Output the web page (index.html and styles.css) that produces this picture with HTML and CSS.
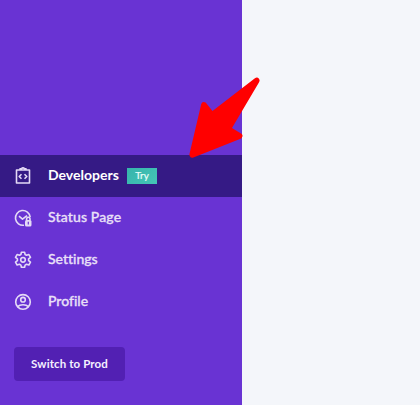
FILE: index.html
```html
<!DOCTYPE html>
<html lang="en">
<head>
<meta charset="utf-8">
<title>Developers</title>
<link rel="stylesheet" href="styles.css">
</head>
<body>
<aside class="sidebar">
  <nav class="menu">
    <a class="item active">
      <svg class="icon" viewBox="0 0 18 18"><path d="M2.5 3h13v13h-13zM6 3V1.8h1.6a1.5 1.5 0 0 1 2.8 0H12V3zM7.5 7.2 5.2 9.5l2.3 2.3M10.5 7.2l2.3 2.3-2.3 2.3"/></svg>
      <span class="label developers">Developers</span><span class="badge">Try</span>
    </a>
    <a class="item">
      <svg class="icon" viewBox="0 0 18 18"><path d="M10 16.2A7.4 7.4 0 1 1 16.2 8M5 7.2l3.5 3L13 6.7"/><rect class="solid" x="11" y="11" width="6.5" height="6.5" rx="1.5"/><path d="M12.6 11.5V10a1.7 1.7 0 0 1 3.4 0v1.5"/><path class="hole" d="M14.3 12.8v2.6"/></svg>
      <span class="label status">Status Page</span>
    </a>
    <a class="item">
      <svg class="icon" viewBox="0 0 18 18"><path d="M7.4 1.3h3.2l.5 2.2 1.4.8 2.4-.7 1.6 2.8-1.9 1.5v1.8l1.9 1.5-1.6 2.8-2.4-.7-1.4.8-.5 2.2H7.4l-.5-2.2-1.4-.8-2.4.7-1.6-2.8 1.9-1.5V7.9L1.5 6.4l1.6-2.8 2.4.7 1.4-.8z"/><circle cx="9" cy="8.8" r="2.3"/></svg>
      <span class="label settings">Settings</span>
    </a>
    <a class="item">
      <svg class="icon" viewBox="0 0 18 18"><circle cx="9" cy="8.9" r="7.3"/><circle cx="9" cy="6.7" r="2.3"/><path d="M3.6 13.6C6 11.1 12 11.1 14.4 13.6"/></svg>
      <span class="label profile">Profile</span>
    </a>
  </nav>
  <button class="switch"><span>Switch to Prod</span></button>
</aside>
<svg class="arrow" viewBox="0 0 420 405"><path d="M192.3 154.7 204 105 212 115 256.7 80.5 228 129 239.5 136z"/></svg>
</body>
</html>
```

FILE: styles.css
```css
* { box-sizing: border-box; }
body {
  margin: 0;
  height: 405px;
  overflow: hidden;
  background: #f4f6fa;
  font-family: Lato, "Open Sans", sans-serif;
  font-variant-ligatures: none;
}
.sidebar {
  width: 242px;
  height: 405px;
  padding-top: 155px;
  background: #6933d3;
}
.item {
  display: flex;
  align-items: center;
  height: 42px;
  padding-left: 14px;
  color: #e9e0f8;
}
.active { background: #351a85; color: #fff; }
.icon {
  width: 18px;
  height: 18px;
  margin-right: 16px;
  fill: none;
  stroke: #e4daf6;
  stroke-width: 1.6;
  stroke-linejoin: round;
}
.icon .solid { fill: #e4daf6; stroke: none; }
.icon .hole { stroke: #6933d3; stroke-width: 1.2; }
.label {
  padding-bottom: 2px;
  font-size: 14px;
  line-height: 20px;
  font-weight: 500;
  -webkit-text-stroke: 0.3px;
  white-space: nowrap;
}
.status { letter-spacing: 0.15px; }
.developers { width: 71px; font-weight: 700; -webkit-text-stroke: 0; }
.badge {
  width: 30px;
  height: 16px;
  margin-left: 8px;
  background: linear-gradient(135deg, #36b4ac, #45c5b7);
  color: #e9fffb;
  font-size: 10px;
  line-height: 15px;
  text-align: center;
  -webkit-text-stroke: 0.2px;
}
.switch {
  display: block;
  width: 111px;
  height: 34px;
  margin: 24px 0 0 14px;
  padding: 0 0 1px;
  border: 0;
  border-radius: 4px;
  background: #5220b3;
  color: #f5f0ff;
  font: 700 11.5px Lato, sans-serif;
  letter-spacing: 0.12px;
  white-space: nowrap;
}
.arrow {
  position: absolute;
  top: 0;
  left: 0;
  width: 420px;
  height: 405px;
  fill: #f00;
  stroke: #f00;
  stroke-width: 5.8;
  stroke-linejoin: round;
}
```
